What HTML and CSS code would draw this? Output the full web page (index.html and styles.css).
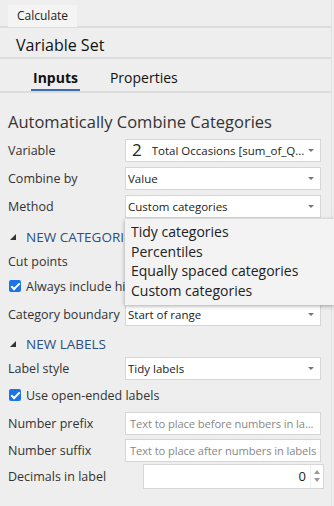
FILE: index.html
```html
<!DOCTYPE html>
<html lang="en">

<head>
    <meta charset="UTF-8">
    <meta name="viewport" content="width=device-width, initial-scale=1.0">
    <title>Variable Set</title>

    <link rel="stylesheet" href="styles.css">
</head>

<body>
    <div class="panel">
        <div class="toolbar">
            <div class="btn">Calculate</div>
        </div>
        <div class="title">Variable Set</div>
        <div class="tabs">
            <div class="tab active">Inputs</div>
            <div class="tab">Properties</div>
        </div>

        <div class="content">
            <h2>Automatically Combine Categories</h2>

            <div class="row">
                <label>Variable</label>
                <div class="select"><span class="num">2</span><span class="txt">Total Occasions [sum_of_Q...</span><span class="caret"></span></div>
            </div>
            <div class="row">
                <label>Combine by</label>
                <div class="select"><span class="txt">Value</span><span class="caret"></span></div>
            </div>
            <div class="row">
                <label>Method</label>
                <div class="select"><span class="txt">Custom categories</span><span class="caret"></span></div>
                <div class="menu">
                    <div>Tidy categories</div>
                    <div>Percentiles</div>
                    <div>Equally spaced categories</div>
                    <div>Custom categories</div>
                </div>
            </div>

            <div class="group"><span class="tri"></span>NEW CATEGORIES</div>
            <div class="row short">
                <label>Cut points</label>
            </div>
            <div class="check">
                <span class="box"></span>Always include highest value
            </div>
            <div class="row">
                <label>Category boundary</label>
                <div class="select"><span class="txt">Start of range</span><span class="caret"></span></div>
            </div>

            <div class="group second"><span class="tri"></span>NEW LABELS</div>
            <div class="row">
                <label>Label style</label>
                <div class="select"><span class="txt">Tidy labels</span><span class="caret"></span></div>
            </div>
            <div class="check small">
                <span class="box"></span>Use open-ended labels
            </div>
            <div class="row tight">
                <label>Number prefix</label>
                <div class="input ph">Text to place before numbers in la...</div>
            </div>
            <div class="row tighter">
                <label>Number suffix</label>
                <div class="input ph">Text to place after numbers in labels</div>
            </div>
            <div class="row">
                <label>Decimals in label</label>
                <div class="input spin">
                    <span class="val">0</span>
                    <span class="arrows"><span class="up"></span><span class="down"></span></span>
                </div>
            </div>
        </div>
    </div>
</body>

</html>
```

FILE: styles.css
```css
body {
    margin: 0;
    background-color: #eeeeee;
    font-family: "Open Sans", "Liberation Sans", sans-serif;
    color: #333;
}

.panel {
    width: 331px;
    height: 506px;
    border-right: 1px solid #e2e2e2;
    background-color: #eeeeee;
}

.toolbar {
    height: 28px;
    padding: 3px 0 0 8px;
    box-sizing: border-box;
    border-bottom: 2px solid #dcdcdc;
}

.btn {
    display: inline-block;
    height: 22px;
    line-height: 21px;
    padding: 0 9px;
    background-color: #f4f4f4;
    font-size: 12px;
    color: #222;
}

.title {
    height: 29px;
    line-height: 34px;
    padding-left: 16px;
    font-size: 16px;
    color: #111;
    border-bottom: 2px solid #dcdcdc;
}

.tabs {
    display: flex;
    height: 32px;
    padding-left: 31px;
    border-bottom: 2px solid #dcdcdc;
}

.tab {
    height: 30px;
    line-height: 37px;
    font-size: 14px;
    color: #111;
    margin-right: 28px;
    padding: 0 2px;
}

.tab.active {
    font-weight: bold;
    border-bottom: 2px solid #3a6db5;
}

.content {
    padding: 17px 10px 0 8px;
}

h2 {
    font-size: 16.5px;
    font-weight: normal;
    margin: 0 0 5px 0;
    color: #333;
}

.row {
    position: relative;
    display: flex;
    align-items: center;
    height: 24px;
    margin-bottom: 4px;
}

.row.short {
    height: 17px;
}

.row.tight {
    margin-bottom: 3px;
}

.row.tighter {
    margin-bottom: 2px;
}

.row label {
    width: 117px;
    flex: none;
    font-size: 12.5px;
    color: #333;
}

.select, .input {
    flex: 1;
    height: 23px;
    box-sizing: border-box;
    border: 1px solid #d6d6d6;
    background-color: white;
    display: flex;
    align-items: center;
    padding: 0 6px 0 2px;
    font-size: 11.5px;
    color: #222;
}

.select .txt {
    flex: 1;
    white-space: nowrap;
    overflow: hidden;
}

.select .num {
    font-size: 17px;
    margin: 0 10px 0 4px;
    line-height: 20px;
}

.caret {
    width: 0;
    height: 0;
    border-left: 3px solid transparent;
    border-right: 3px solid transparent;
    border-top: 3px solid #777;
}

.ph {
    color: #888;
    padding-left: 4px;
    padding-right: 2px;
    font-size: 11.2px;
    letter-spacing: -0.1px;
    white-space: nowrap;
    overflow: hidden;
}

.spin {
    flex: none;
    width: 181px;
    margin-left: 18px;
    height: 25px;
    justify-content: flex-end;
    padding: 0 0 0 4px;
}

.spin .val {
    font-size: 13px;
    margin-right: 4px;
}

.arrows {
    width: 12px;
    height: 23px;
    display: flex;
    flex-direction: column;
    align-items: center;
    justify-content: center;
    gap: 4px;
    border-left: 1px solid #eee;
}

.arrows .up {
    border-left: 3px solid transparent;
    border-right: 3px solid transparent;
    border-bottom: 4px solid #999;
}

.arrows .down {
    border-left: 3px solid transparent;
    border-right: 3px solid transparent;
    border-top: 4px solid #999;
}

.group {
    display: flex;
    align-items: center;
    height: 20px;
    margin: 9px 0 6px 2px;
    font-size: 13.5px;
    color: #2b4f82;
}

.group.second {
    margin-top: 8px;
    margin-bottom: 2px;
}

.tri {
    width: 0;
    height: 0;
    border-left: 6px solid transparent;
    border-bottom: 6px solid #333;
    margin-right: 10px;
}

.check {
    display: flex;
    align-items: center;
    height: 24px;
    margin-bottom: 4px;
    font-size: 12.5px;
    white-space: nowrap;
}

.check.small {
    height: 22px;
    margin-bottom: 5px;
}

.box {
    flex: none;
    width: 12px;
    height: 12px;
    border-radius: 2px;
    background-color: #1a73e8;
    margin: 0 5px 0 1px;
    position: relative;
}

.box::after {
    content: "";
    position: absolute;
    left: 3.5px;
    top: 1px;
    width: 3px;
    height: 7px;
    border: solid white;
    border-width: 0 2px 2px 0;
    transform: rotate(45deg);
}

.menu {
    position: absolute;
    left: 117px;
    top: 25px;
    width: 203px;
    padding: 3px 0 4px 6px;
    background-color: #f3f3f3;
    box-shadow: 0 1px 4px rgba(0, 0, 0, 0.35);
    font-size: 14px;
    color: #222;
    z-index: 2;
}

.menu div {
    height: 19.7px;
    line-height: 20px;
}
```
